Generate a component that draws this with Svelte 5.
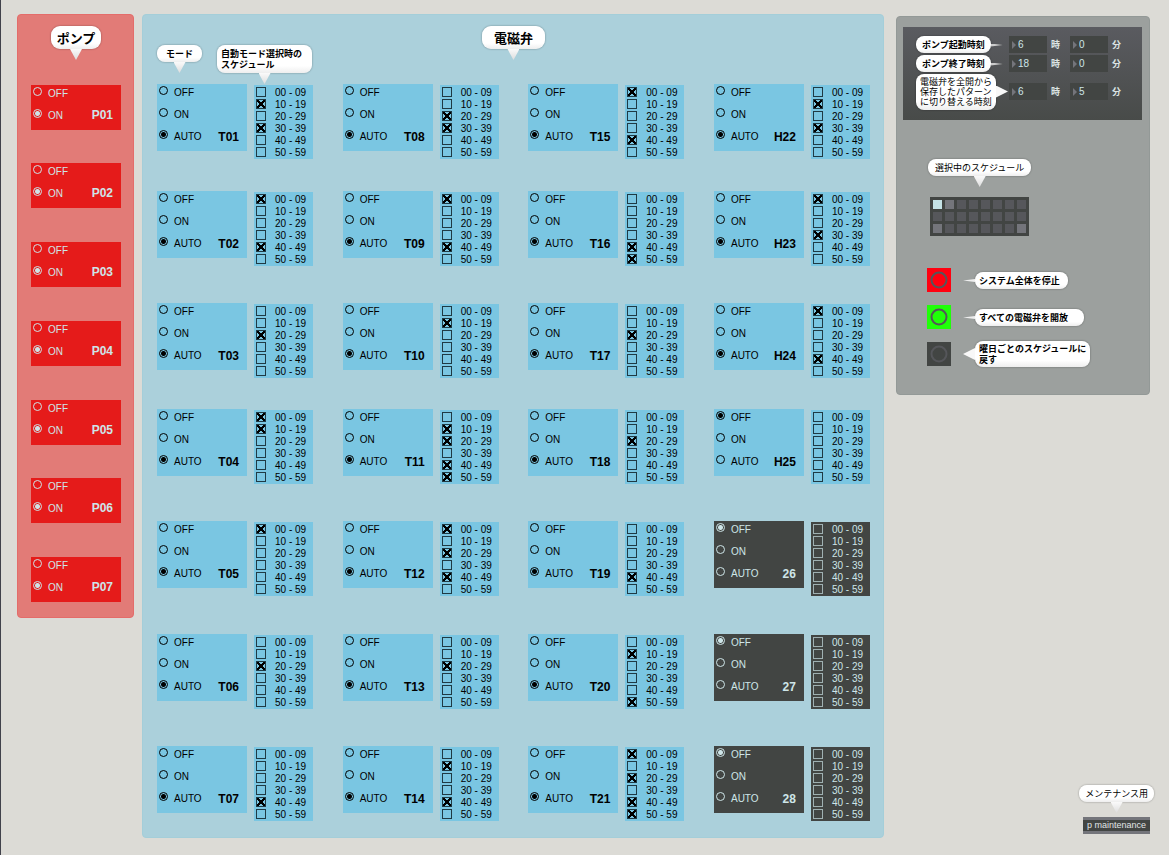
<script>
  const slots = ['00 - 09', '10 - 19', '20 - 29', '30 - 39', '40 - 49', '50 - 59'];
  const pumps = ['P01', 'P02', 'P03', 'P04', 'P05', 'P06', 'P07'];
  const valve = (name, checks, mode = 'AUTO', spare = false) => ({ name, checks, mode, spare });
  const valves = [
    valve('T01', [1, 3]), valve('T02', [0, 4]), valve('T03', [2]), valve('T04', [0, 1]),
    valve('T05', [0]), valve('T06', [2]), valve('T07', [4]),
    valve('T08', [2, 3]), valve('T09', [0, 4]), valve('T10', [1]), valve('T11', [1, 2, 4, 5]),
    valve('T12', [0, 2, 4]), valve('T13', [2]), valve('T14', [1, 4]),
    valve('T15', [0, 4]), valve('T16', [4, 5]), valve('T17', [2]), valve('T18', [2]),
    valve('T19', [4]), valve('T20', [1, 5]), valve('T21', [0, 2, 4, 5]),
    valve('H22', [1, 3]), valve('H23', [0, 3]), valve('H24', [0, 4]), valve('H25', [], 'OFF'),
    valve('26', [], 'OFF', true), valve('27', [], 'OFF', true), valve('28', [], 'OFF', true)
  ];
  const times = [
    { label: ['ポンプ起動時刻'], hour: 6, minute: 0 },
    { label: ['ポンプ終了時刻'], hour: 18, minute: 0 },
    { label: ['電磁弁を全開から', '保存したパターン', 'に切り替える時刻'], hour: 6, minute: 5 }
  ];
  const actions = [
    { kind: 'stop', label: ['システム全体を停止'] },
    { kind: 'open', label: ['すべての電磁弁を開放'] },
    { kind: 'reset', label: ['曜日ごとのスケジュールに', '戻す'] }
  ];
  const presets = Array.from({ length: 24 }, (_, i) => i);
  const stored = [1, 16, 23];
  let selected = $state(0);
</script>

{#snippet modes(name, options, current)}
  <div class="modes">
    {#each options as option}
      <label><input type="radio" name={name} value={option} checked={option === current} /><span>{option}</span></label>
    {/each}
  </div>
  <strong class="name">{name}</strong>
{/snippet}

<main>
  <section class="panel pumps">
    <h2 class="bubble down title">ポンプ</h2>
    <div class="pump-list">
      {#each pumps as pump}
        <div class="card pump">{@render modes(pump, ['OFF', 'ON'], 'ON')}</div>
      {/each}
    </div>
  </section>

  <section class="panel valves">
    <header>
      <h2 class="bubble down title">電磁弁</h2>
      <div class="hints">
        <span class="bubble down mode-hint">モード</span>
        <span class="bubble down">自動モード選択時の<br />スケジュール</span>
      </div>
    </header>
    <div class="valve-grid">
      {#each valves as v}
        <div class="unit" class:spare={v.spare}>
          <div class="card">{@render modes(v.name, ['OFF', 'ON', 'AUTO'], v.mode)}</div>
          <div class="slots">
            {#each slots as slot, i}
              <label><input type="checkbox" checked={v.checks.includes(i)} /><span>{slot}</span></label>
            {/each}
          </div>
        </div>
      {/each}
    </div>
  </section>

  <aside>
    <section class="panel control">
      <div class="times">
        {#each times as t, i}
          <div class="time" class:tall={t.label.length > 1}>
            <div class="caption">
              <span class="bubble side" class:plain={t.label.length > 1} class:wedge={t.label.length > 1}>
                {#each t.label as line}<span class="line">{line}</span>{/each}
              </span>
            </div>
            <label class="field"><input type="text" inputmode="numeric" aria-label={t.label.join('') + ' 時'} value={t.hour} /></label>
            <span class="unit-name">時</span>
            <label class="field"><input type="text" inputmode="numeric" aria-label={t.label.join('') + ' 分'} value={t.minute} /></label>
            <span class="unit-name">分</span>
          </div>
        {/each}
      </div>

      <div class="schedule">
        <span class="bubble down plain">選択中のスケジュール</span>
        <div class="presets">
          {#each presets as p}
            <button
              class:stored={stored.includes(p)}
              class:selected={selected === p}
              aria-label={String(p + 1)}
              onclick={() => (selected = p)}
            ></button>
          {/each}
        </div>
      </div>

      <div class="actions">
        {#each actions as a}
          <div class="action">
            <button class={a.kind} aria-labelledby={a.kind}>
              <svg viewBox="0 0 24 24" width="24" height="24" aria-hidden="true"><circle cx="12" cy="12" r="7.5" /></svg>
            </button>
            <span id={a.kind} class="bubble left {a.kind}-hint" class:wedge={a.label.length > 1}>
              {#each a.label as line}<span class="line">{line}</span>{/each}
            </span>
          </div>
        {/each}
      </div>
    </section>

    <div class="maintenance">
      <span class="bubble down plain">メンテナンス用</span>
      <button>p maintenance</button>
    </div>
  </aside>
</main>

<style>
  :global(body) {
    background: #dcdbd6;
  }
  main {
    box-sizing: border-box;
    min-height: 100vh;
    display: flex;
    align-items: flex-start;
    gap: 8px;
    padding: 14px 15px 16px 16px;
    border-left: 1px solid #41424b;
    font: 10px/12px "Liberation Sans", "Noto Sans CJK JP", sans-serif;
    color: #000;
  }
  h2 {
    margin: 0;
  }
  input, button {
    margin: 0;
    padding: 0;
    border: 0;
    font: inherit;
    color: inherit;
  }
  .panel {
    box-sizing: border-box;
    border: 1px solid;
    border-radius: 4px;
  }

  .bubble {
    position: relative;
    box-sizing: border-box;
    display: inline-block;
    padding: 3px 9px;
    border-radius: 8px;
    background: linear-gradient(#fff 75%, #eee);
    box-shadow: 0 0 2px rgba(0, 0, 0, 0.4);
    font: bold 9px/11px "Noto Sans CJK JP", sans-serif;
    white-space: nowrap;
    color: #000;
  }
  .bubble::after {
    content: "";
    position: absolute;
  }
  .line {
    display: block;
  }
  .plain {
    font-weight: normal;
  }
  .down::after {
    top: 100%;
    left: calc(50% - 6px);
    width: 12px;
    height: 11px;
    background: linear-gradient(#fafafa, #ddd);
    clip-path: polygon(0 0, 100% 0, 50% 100%);
  }
  .side::after {
    left: 100%;
    top: calc(50% - 1px);
    width: 12px;
    height: 3px;
    background: #ccc;
    clip-path: polygon(0 0, 100% 50%, 0 100%);
  }
  .left::after {
    right: 100%;
    top: calc(50% - 1px);
    width: 12px;
    height: 3px;
    background: #eee;
    clip-path: polygon(100% 0, 0 50%, 100% 100%);
  }
  .wedge::after {
    top: calc(50% - 6px);
    height: 12px;
    background: #f8f8f8;
  }
  .title {
    padding: 3px 12px;
    border-radius: 9px;
    font-size: 13px;
    line-height: 17px;
  }

  .card {
    position: relative;
    box-sizing: border-box;
    width: 90px;
    height: 67px;
    display: flex;
    justify-content: space-between;
    align-items: flex-end;
    padding: 0 8px 7px 2px;
    background: #7ac6e2;
  }
  .modes {
    align-self: flex-start;
    display: grid;
    grid-auto-rows: 22px;
    padding-top: 2px;
  }
  .modes label {
    display: flex;
    align-items: flex-start;
    gap: 6px;
  }
  .modes span {
    padding-top: 1px;
  }
  .modes input {
    appearance: none;
    box-sizing: border-box;
    width: 9px;
    height: 9px;
    border: 1px solid currentColor;
    border-radius: 50%;
  }
  .modes input:checked {
    background: radial-gradient(circle, currentColor 0 2px, transparent 3px);
  }
  .name {
    font-size: 12px;
    line-height: 14px;
  }

  .pumps {
    width: 117px;
    padding: 11px 12px 15px 13px;
    text-align: center;
    background: #e27b77;
    border-color: #e46c6a;
  }
  .pumps .title {
    padding: 3px 6px;
  }
  .pump-list {
    display: grid;
    grid-template-rows: 78px 79px 79px 79px 78px 79px 45px;
    margin-top: 36px;
    text-align: left;
  }
  .pump {
    height: 45px;
    padding-bottom: 8px;
    background: #e51b1a;
    color: #cee5e8;
  }

  .valves {
    flex: 1;
    padding: 0 13px 15px 14px;
    background: #abd0db;
    border-color: #a4ced9;
  }
  header {
    display: grid;
    height: 69px;
  }
  header > * {
    grid-area: 1 / 1;
    align-self: start;
  }
  header .title {
    justify-self: center;
    margin-top: 11px;
  }
  .hints {
    display: flex;
    align-items: flex-start;
    gap: 15px;
    margin-top: 30px;
  }
  .hints .bubble {
    padding: 3px 10px 3px 4px;
  }
  .hints .mode-hint {
    padding: 3px 9px;
  }
  .valve-grid {
    display: grid;
    grid-auto-flow: column;
    grid-template-rows: 107px 112px 106px 112px 113px 112px 76px;
    justify-content: space-between;
  }
  .unit {
    display: flex;
    align-items: flex-start;
    gap: 7px;
  }
  .slots {
    box-sizing: border-box;
    width: 59px;
    margin-top: 1px;
    padding: 1px 2px;
    background: #7ac6e2;
  }
  .slots label {
    display: flex;
    align-items: center;
    gap: 9px;
    height: 12px;
    white-space: nowrap;
  }
  .slots span {
    padding-top: 1px;
  }
  .slots input {
    appearance: none;
    box-sizing: border-box;
    flex: none;
    width: 10px;
    height: 10px;
    border: 1px solid #1f3a44;
  }
  .slots input:checked {
    background:
      linear-gradient(45deg, transparent 41%, #000 43% 57%, transparent 59%) center / 8px 8px no-repeat,
      linear-gradient(-45deg, transparent 41%, #000 43% 57%, transparent 59%) center / 8px 8px no-repeat;
  }
  .spare .card, .spare .slots {
    background: #424543;
    color: #cee5e8;
  }
  .spare .slots input {
    border-color: #9fb0b2;
  }

  aside {
    align-self: stretch;
    width: 262px;
    display: flex;
    flex-direction: column;
    justify-content: space-between;
    padding: 2px 0 5px 4px;
    box-sizing: border-box;
  }
  .control {
    width: 254px;
    padding: 10px 7px 28px 6px;
    background: #9ca09e;
    border-color: #939997;
  }
  .times {
    padding: 8px 14px 10px 13px;
    background: linear-gradient(#5a5b60, #484b49);
    color: #cee5e8;
  }
  .time {
    display: flex;
    align-items: center;
    height: 19px;
  }
  .time.tall {
    height: 37px;
  }
  .caption {
    flex: 1;
    display: flex;
  }
  .times .bubble {
    padding: 3px 6px;
  }
  .times .plain {
    padding: 3px 4px;
    line-height: 10px;
  }
  .field {
    position: relative;
    width: 38px;
    height: 17px;
    background: #424543;
  }
  .field::before {
    content: "";
    position: absolute;
    left: 3px;
    top: 5px;
    border: solid transparent;
    border-width: 4px 0 4px 4px;
    border-left-color: #74757b;
  }
  .field input {
    box-sizing: border-box;
    width: 100%;
    height: 100%;
    padding-left: 9px;
    background: none;
  }
  .unit-name {
    width: 19px;
    padding-left: 4px;
    box-sizing: content-box;
    font: bold 9px/17px "Noto Sans CJK JP", sans-serif;
    color: #dce4e4;
  }
  .unit-name:last-child {
    width: 16px;
  }

  .schedule {
    display: flex;
    flex-direction: column;
    align-items: flex-start;
    gap: 21px;
    margin: 39px 0 0 25px;
  }
  .schedule .bubble {
    padding: 3px 7px;
  }
  .presets {
    display: grid;
    grid-template-columns: repeat(8, 9px);
    grid-auto-rows: 9px;
    gap: 3px;
    margin-left: 2px;
    padding: 3px;
    background: #424543;
  }
  .presets button {
    background: #56575b;
  }
  .presets .stored {
    background: #74757b;
  }
  .presets .selected {
    background: #c5e2e6;
  }
  .actions {
    display: grid;
    gap: 13px;
    margin: 32px 0 0 24px;
  }
  .action {
    display: flex;
    align-items: center;
    gap: 24px;
    height: 24px;
  }
  .action button {
    width: 24px;
    height: 24px;
  }
  .action svg {
    display: block;
    fill: none;
    stroke: #55565a;
    stroke-width: 2;
  }
  .stop {
    background: #ff0010;
  }
  .open {
    background: #20ff08;
  }
  .reset {
    background: #424543;
  }
  .action .bubble {
    padding: 3px 8px 3px 4px;
  }
  .action .open-hint {
    padding-right: 16px;
  }
  .action .reset-hint {
    padding: 2px 4px;
  }

  .maintenance {
    align-self: flex-end;
    display: flex;
    flex-direction: column;
    align-items: center;
    gap: 15px;
  }
  .maintenance .bubble {
    padding: 3px 6px;
  }
  .maintenance button {
    height: 17px;
    padding: 0 4px;
    border: solid #74757b;
    border-width: 3px 0;
    background: #424543;
    color: #e0e6e6;
    font-size: 9px;
    line-height: 11px;
  }
</style>
